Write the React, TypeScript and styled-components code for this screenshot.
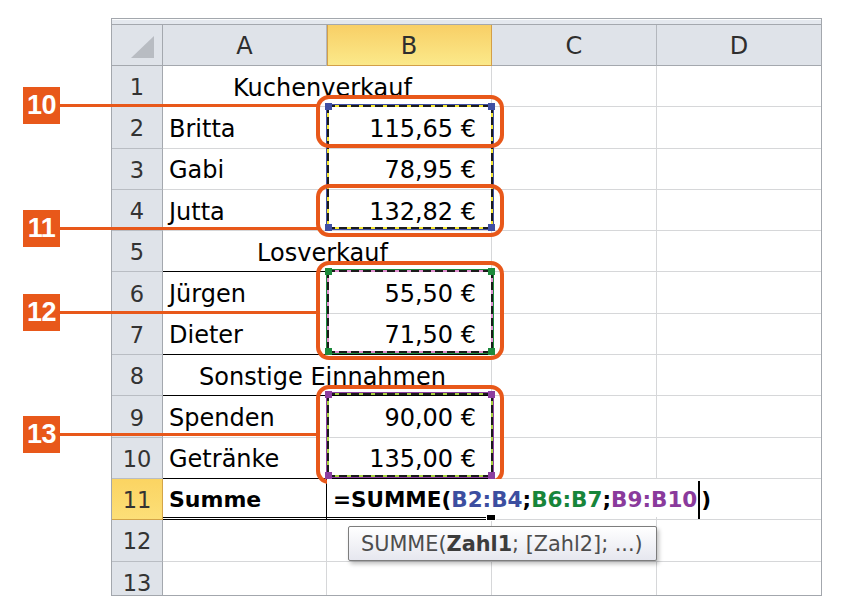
import React from 'react';
import styled, { createGlobalStyle, css } from 'styled-components';

const ORANGE = '#e8581a';
const GRID = '#d6d7d9';
const HEAD_BG = '#dfe3e9';
const HEAD_LINE = '#a4a8ae';

const GlobalStyle = createGlobalStyle`
  html, body {
    margin: 0;
    padding: 0;
    background: #fff;
  }
  body {
    font-family: 'DejaVu Sans', 'Liberation Sans', sans-serif;
  }
`;

const Page = styled.div`
  position: relative;
  width: 850px;
  height: 612px;
  box-sizing: border-box;
  padding: 18px 0 0 111px;
  overflow: hidden;
  background: #fff;
`;

const Sheet = styled.div`
  width: 711px;
  height: 578px;
  box-sizing: border-box;
  border: 1px solid #a3a7ad;
  overflow: hidden;
  background: #fff;
`;

const TopStrip = styled.div`
  height: 5px;
  background: #e4e8ee;
  box-shadow: inset 0 1px 0 #fbfcfd;
  border-bottom: 1px solid ${HEAD_LINE};
`;

const Grid = styled.div`
  display: grid;
  grid-template-columns: 51px 164px 165px 165px 164px;
  grid-template-rows: 41px repeat(13, 41.3px);
`;

const Corner = styled.div`
  position: relative;
  background: ${HEAD_BG};
  border-right: 1px solid ${HEAD_LINE};
  border-bottom: 1px solid ${HEAD_LINE};

  &::after {
    content: '';
    position: absolute;
    right: 8px;
    bottom: 7px;
    width: 23px;
    height: 22px;
    background: #b8bcc2;
    clip-path: polygon(100% 0, 100% 100%, 0 100%);
  }
`;

const ColHead = styled.div<{ $active?: boolean; $last?: boolean }>`
  display: flex;
  align-items: center;
  justify-content: center;
  padding-top: 2px;
  box-sizing: border-box;
  font-size: 24px;
  color: #2e2e2e;
  background: ${HEAD_BG};
  border-right: ${p => (p.$last ? 'none' : `1px solid #b3b7bd`)};
  border-bottom: 1px solid ${HEAD_LINE};
  ${p =>
    p.$active &&
    css`
      background: linear-gradient(#f8cf66, #fbe98a);
      border-right: 1px solid #d39f48;
      border-bottom: 1px solid #d39f48;
      box-shadow: inset 1px 0 0 #d39f48;
    `}
`;

const RowHead = styled.div<{ $active?: boolean }>`
  display: flex;
  align-items: center;
  justify-content: center;
  padding-top: 2px;
  box-sizing: border-box;
  font-size: 22.5px;
  color: #333;
  background: ${HEAD_BG};
  border-right: 1px solid ${HEAD_LINE};
  border-bottom: 1px solid #b9bdc3;
  ${p =>
    p.$active &&
    css`
      background: linear-gradient(#fbd462, #fcdf78);
      border-right: 1px solid #d3a448;
      border-bottom: 1px solid #d3a448;
    `}
`;

type Line = 'grid' | 'black' | 'double';

const Cell = styled.div<{
  $span?: number;
  $align?: 'left' | 'center' | 'right';
  $bold?: boolean;
  $line?: Line;
  $last?: boolean;
  $edge?: boolean;
}>`
  grid-column: span ${p => p.$span ?? 1};
  display: flex;
  align-items: center;
  justify-content: ${p =>
    p.$align === 'right' ? 'flex-end' : p.$align === 'center' ? 'center' : 'flex-start'};
  box-sizing: border-box;
  padding: 3px 15px 0 6px;
  font-size: ${p => (p.$bold ? '22px' : '24px')};
  font-weight: ${p => (p.$bold ? 700 : 400)};
  color: #000;
  white-space: nowrap;
  border-right: ${p =>
    p.$last ? 'none' : p.$edge ? '1px solid #000' : `1px solid ${GRID}`};
  border-bottom: ${p =>
    p.$line === 'black'
      ? '1px solid #000'
      : p.$line === 'double'
      ? '3px double #000'
      : `1px solid ${GRID}`};
`;

const FormulaCell = styled(Cell)`
  position: relative;
  align-items: stretch;
  padding: 0;
  box-shadow: inset 2px 0 0 #000;
`;

const EditBox = styled.span`
  position: relative;
  z-index: 2;
  display: flex;
  align-items: center;
  padding: 3px 8px 0 6px;
  background: #fff;
  font-size: 21.5px;
  font-weight: 700;
  color: #000;
`;

const Ref = styled.span<{ $color: string }>`
  color: ${p => p.$color};
`;

const Caret = styled.span`
  display: inline-block;
  width: 0;
  height: 38px;
  margin: 0 1px 0 1px;
  border-left: 2px solid #000;
  align-self: center;
`;

const FillHandle = styled.span`
  position: absolute;
  z-index: 3;
  right: -5px;
  bottom: -4px;
  width: 8px;
  height: 5px;
  background: #000;
  border: 1px solid #fff;
`;

const Range = styled.div<{ $x: number; $y: number; $w: number; $h: number; $edge: string; $gap: string }>`
  position: absolute;
  left: ${p => p.$x}px;
  top: ${p => p.$y}px;
  width: ${p => p.$w}px;
  height: ${p => p.$h}px;
  box-sizing: border-box;
  box-shadow: 0 0 0 1px ${p => p.$edge};
  ${p => {
    const h = `repeating-linear-gradient(90deg, #1b1b1b 0 8px, ${p.$gap} 8px 12px)`;
    const v = `repeating-linear-gradient(180deg, #1b1b1b 0 8px, ${p.$gap} 8px 12px)`;
    return css`
      background: ${h} left top / 100% 2px no-repeat, ${h} left bottom / 100% 2px no-repeat,
        ${v} left top / 2px 100% no-repeat, ${v} right top / 2px 100% no-repeat;
    `;
  }}
`;

const Handle = styled.span<{ $color: string; $v: 'top' | 'bottom'; $h: 'left' | 'right' }>`
  position: absolute;
  ${p => p.$v}: -2px;
  ${p => p.$h}: -2px;
  width: 7px;
  height: 7px;
  background: ${p => p.$color};
`;

const Frame = styled.div<{ $x: number; $y: number; $w: number; $h: number }>`
  position: absolute;
  left: ${p => p.$x}px;
  top: ${p => p.$y}px;
  width: ${p => p.$w}px;
  height: ${p => p.$h}px;
  box-sizing: border-box;
  border: 4px solid ${ORANGE};
  border-radius: 13px;
`;

const Callout = styled.div<{ $y: number }>`
  position: absolute;
  left: 23px;
  top: ${p => p.$y}px;
  display: flex;
  align-items: center;
`;

const Badge = styled.div`
  width: 37px;
  height: 37px;
  display: flex;
  align-items: center;
  justify-content: center;
  background: ${ORANGE};
  color: #fff;
  font-family: 'Liberation Sans', Arial, sans-serif;
  font-weight: 700;
  font-size: 27px;
  letter-spacing: -0.5px;
`;

const Leader = styled.div`
  width: 258px;
  height: 3px;
  background: ${ORANGE};
`;

const Tooltip = styled.div`
  position: absolute;
  left: 348px;
  top: 526px;
  width: 309px;
  height: 35px;
  box-sizing: border-box;
  display: flex;
  align-items: center;
  padding: 1px 0 0 12px;
  border: 1px solid #7d7d7d;
  border-radius: 2px;
  background: linear-gradient(#ffffff, #e6e7ef);
  box-shadow: 2px 3px 4px rgba(0, 0, 0, 0.25);
  font-size: 20.8px;
  color: #4d4d4d;
  white-space: nowrap;
`;

const Strong = styled.b`
  color: #3c3c3c;
`;

type Row = { n: number; a?: string; b?: string; title?: string; line?: Line };

const rows: Row[] = [
  { n: 1, title: 'Kuchenverkauf' },
  { n: 2, a: 'Britta', b: '115,65 €' },
  { n: 3, a: 'Gabi', b: '78,95 €' },
  { n: 4, a: 'Jutta', b: '132,82 €' },
  { n: 5, title: 'Losverkauf', line: 'black' },
  { n: 6, a: 'Jürgen', b: '55,50 €' },
  { n: 7, a: 'Dieter', b: '71,50 €', line: 'black' },
  { n: 8, title: 'Sonstige Einnahmen', line: 'black' },
  { n: 9, a: 'Spenden', b: '90,00 €' },
  { n: 10, a: 'Getränke', b: '135,00 €', line: 'black' },
];

const ranges = [
  { x: 327, y: 105, w: 166, h: 124, edge: '#3f4fa3', gap: '#f4e633' },
  { x: 327, y: 270, w: 166, h: 83, edge: '#1d8a3c', gap: '#df8fcf' },
  { x: 327, y: 393, w: 166, h: 84, edge: '#8c3fa0', gap: '#a6d13f' },
];

const frames = [
  { x: 316, y: 95, w: 188, h: 53 },
  { x: 316, y: 184, w: 188, h: 53 },
  { x: 316, y: 261, w: 188, h: 99 },
  { x: 316, y: 385, w: 188, h: 99 },
];

const callouts = [
  { label: '10', y: 87 },
  { label: '11', y: 210 },
  { label: '12', y: 294 },
  { label: '13', y: 416 },
];

const corners = [
  ['top', 'left'],
  ['top', 'right'],
  ['bottom', 'left'],
  ['bottom', 'right'],
] as const;

const DataRow = ({ row }: { row: Row }) => (
  <>
    <RowHead>{row.n}</RowHead>
    {row.title ? (
      <Cell $span={2} $align="center" $line={row.line}>
        {row.title}
      </Cell>
    ) : (
      <>
        <Cell $line={row.line}>{row.a}</Cell>
        <Cell $align="right" $line={row.line}>
          {row.b}
        </Cell>
      </>
    )}
    <Cell />
    <Cell $last />
  </>
);

export default function App() {
  return (
    <Page>
      <GlobalStyle />
      <Sheet>
        <TopStrip />
        <Grid>
          <Corner />
          <ColHead>A</ColHead>
          <ColHead $active>B</ColHead>
          <ColHead>C</ColHead>
          <ColHead $last>D</ColHead>

          {rows.map(r => (
            <DataRow key={r.n} row={r} />
          ))}

          <RowHead $active>11</RowHead>
          <Cell $bold $line="double" $edge>
            Summe
          </Cell>
          <FormulaCell $line="double">
            <EditBox>
              =SUMME(
              <Ref $color="#3c4ea0">B2:B4</Ref>;
              <Ref $color="#17853a">B6:B7</Ref>;
              <Ref $color="#8a3a9c">B9:B10</Ref>
              <Caret />)
            </EditBox>
            <FillHandle />
          </FormulaCell>
          <Cell />
          <Cell $last />

          {[12, 13].map(n => (
            <React.Fragment key={n}>
              <RowHead>{n}</RowHead>
              <Cell />
              <Cell />
              <Cell />
              <Cell $last />
            </React.Fragment>
          ))}
        </Grid>
      </Sheet>

      {ranges.map((r, i) => (
        <Range key={i} $x={r.x} $y={r.y} $w={r.w} $h={r.h} $edge={r.edge} $gap={r.gap}>
          {corners.map(([v, h]) => (
            <Handle key={v + h} $v={v} $h={h} $color={r.edge} />
          ))}
        </Range>
      ))}

      {frames.map((f, i) => (
        <Frame key={i} $x={f.x} $y={f.y} $w={f.w} $h={f.h} />
      ))}

      {callouts.map(c => (
        <Callout key={c.label} $y={c.y}>
          <Badge>{c.label}</Badge>
          <Leader />
        </Callout>
      ))}

      <Tooltip>
        SUMME(<Strong>Zahl1</Strong>; [Zahl2]; ...)
      </Tooltip>
    </Page>
  );
}
